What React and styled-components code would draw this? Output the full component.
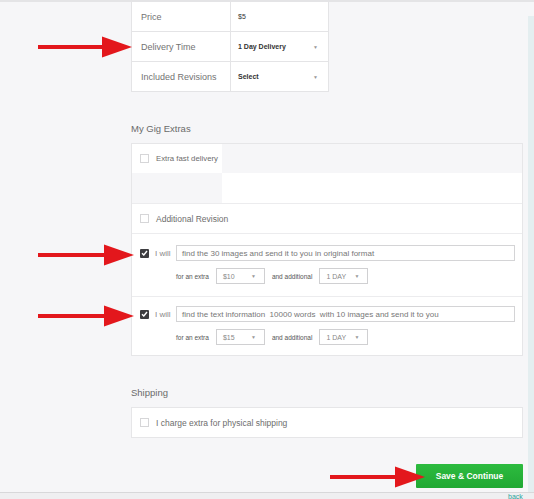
import React from 'react'
import styled, { createGlobalStyle } from 'styled-components'

const GlobalStyle = createGlobalStyle`
    html, body {
        margin: 0;
        padding: 0;
        background: #f6f6f8;
        font-family: "Liberation Sans", Arial, sans-serif;
    }
`

const Page = styled.div`
    position: relative;
    height: 499px;
    overflow: hidden;
    border-top: 2px solid #e4e4e6;
    box-sizing: border-box;
`

const Column = styled.div`
    margin-left: 131px;
    width: 392px;
    display: flex;
    flex-direction: column;
`

const PriceTable = styled.div`
    width: 198px;
    background: #fff;
    border: 1px solid #e4e4e6;
    border-top: none;
    box-sizing: border-box;
`

const PriceRow = styled.div`
    display: grid;
    grid-template-columns: 99px 1fr;
    height: 30px;
    border-bottom: 1px solid #e4e4e6;
    box-sizing: border-box;
    &:last-child { border-bottom: none; height: 29px; }
`

const Label = styled.div`
    display: flex;
    align-items: center;
    padding-left: 9px;
    font-size: 9px;
    color: #737373;
    border-right: 1px solid #e4e4e6;
`

const Value = styled.div`
    display: flex;
    align-items: center;
    justify-content: space-between;
    padding: 0 10px 0 7px;
    font-size: 7px;
    color: #333;
    font-weight: ${p => (p.$bold ? 600 : 400)};
`

const Caret = styled.span`
    font-size: 5px;
    color: #999;
`

const Heading = styled.div`
    font-size: 9.5px;
    color: #6a6a6a;
    line-height: 12px;
    margin-top: ${p => p.$top}px;
    margin-bottom: 8px;
`

const Box = styled.div`
    border: 1px solid #e6e6e8;
    background: #fff;
`

const SplitRow = styled.div`
    display: grid;
    grid-template-columns: 90px 1fr;
    height: ${p => p.$h}px;
`

const Cell = styled.div`
    display: flex;
    align-items: center;
    background: ${p => (p.$white ? '#fff' : '#f6f6f8')};
    padding-left: 8px;
    gap: 7px;
    white-space: nowrap;
`

const OptionRow = styled.div`
    display: flex;
    align-items: center;
    gap: 7px;
    height: 29px;
    padding-left: 8px;
    border-top: ${p => (p.$first ? 'none' : '1px solid #ececee')};
    font-size: 8.5px;
    color: #6d6d6d;
`

const Check = styled.span`
    width: 7px;
    height: 7px;
    flex: none;
    border: 1px solid #d6d6d8;
    background: #fff;
    display: inline-flex;
`

const Checked = styled.span`
    width: 9px;
    height: 9px;
    flex: none;
    border-radius: 1px;
    background: #3d3d40;
    display: inline-flex;
    align-items: center;
    justify-content: center;
`

const Text = styled.span`
    font-size: 7.8px;
    color: #6d6d6d;
`

const Extra = styled.div`
    border-top: 1px solid #ececee;
    padding: ${p => p.$pad};
    display: flex;
    flex-direction: column;
    gap: 7px;
`

const WillLine = styled.div`
    display: flex;
    align-items: center;
    padding-left: 8px;
    padding-right: 7px;
`

const Will = styled.span`
    font-size: 8px;
    color: #888;
    margin-left: 6px;
    width: 21px;
`

const TextInput = styled.div`
    flex: 1;
    height: 16px;
    border: 1px solid #d4d4d6;
    box-sizing: border-box;
    display: flex;
    align-items: center;
    padding-left: 5px;
    font-size: 8px;
    color: #777;
    white-space: pre;
`

const Terms = styled.div`
    display: flex;
    align-items: center;
    padding-left: 44px;
    gap: 7px;
`

const Small = styled.span`
    font-size: 6.5px;
    color: #555;
`

const MiniSelect = styled.div`
    width: 49px;
    height: 16px;
    box-sizing: border-box;
    border: 1px solid #d0d0d2;
    background: #fff;
    display: flex;
    align-items: center;
    justify-content: space-between;
    padding: 0 8px 0 6px;
    font-size: 7px;
    color: #888;
`

const Actions = styled.div`
    display: flex;
    justify-content: flex-end;
    margin-top: 26px;
`

const SaveButton = styled.button`
    width: 107px;
    height: 24px;
    border: none;
    border-radius: 1px;
    background: linear-gradient(#2dbb3f, #20a833);
    color: #fff;
    font-family: inherit;
    font-size: 8.5px;
    font-weight: 700;
`

const Footer = styled.div`
    position: absolute;
    left: 0;
    right: 0;
    top: 490px;
    bottom: 0;
    border-top: 1px solid #d8d8da;
    background: #efeff1;
`

const Back = styled.span`
    position: absolute;
    left: 508px;
    top: 0;
    font-size: 7px;
    line-height: 8px;
    color: #2aa39b;
`

const SideStrip = styled.div`
    position: absolute;
    right: 0;
    top: 14px;
    bottom: 0;
    width: 6px;
    background: #e4eef0;
`

const Pointer = styled.svg`
    position: absolute;
    left: 0;
    top: 0;
    pointer-events: none;
`

function Arrow({ x1, x2, y }) {
    const base = x2 - 30
    return (
        <>
            <rect x={x1} y={y - 2} width={base - x1} height={4} fill="#e3171c" />
            <polygon points={`${base},${y - 10.5} ${x2},${y} ${base},${y + 10.5}`} fill="#e3171c" />
        </>
    )
}

const Tick = () => (
    <svg width="7" height="6" viewBox="0 0 7 6">
        <path d="M1 3.2 L2.8 5 L6 1" stroke="#fff" strokeWidth="1.4" fill="none" />
    </svg>
)

function ExtraItem({ text, price, pad }) {
    return (
        <Extra $pad={pad}>
            <WillLine>
                <Checked><Tick /></Checked>
                <Will>I will</Will>
                <TextInput>{text}</TextInput>
            </WillLine>
            <Terms>
                <Small>for an extra</Small>
                <MiniSelect>{price}<Caret>▼</Caret></MiniSelect>
                <Small>and additional</Small>
                <MiniSelect>1 DAY<Caret>▼</Caret></MiniSelect>
            </Terms>
        </Extra>
    )
}

export default function App() {
    return (
        <Page>
            <GlobalStyle />
            <Column>
                <PriceTable>
                    <PriceRow>
                        <Label>Price</Label>
                        <Value>$5</Value>
                    </PriceRow>
                    <PriceRow>
                        <Label>Delivery Time</Label>
                        <Value $bold>1 Day Delivery<Caret>▼</Caret></Value>
                    </PriceRow>
                    <PriceRow>
                        <Label>Included Revisions</Label>
                        <Value $bold>Select<Caret>▼</Caret></Value>
                    </PriceRow>
                </PriceTable>

                <Heading $top={31}>My Gig Extras</Heading>
                <Box>
                    <SplitRow $h={29}>
                        <Cell $white><Check /><Text>Extra fast delivery</Text></Cell>
                        <Cell />
                    </SplitRow>
                    <SplitRow $h={30}>
                        <Cell />
                        <Cell $white />
                    </SplitRow>
                    <OptionRow><Check />Additional Revision</OptionRow>
                    <ExtraItem
                        text="find the 30 images and send it to you in original format"
                        price="$10"
                        pad="11px 0 12px"
                    />
                    <ExtraItem
                        text="find the text information  10000 words  with 10 images and send it to you"
                        price="$15"
                        pad="9px 0 10px"
                    />
                </Box>

                <Heading $top={31}>Shipping</Heading>
                <Box>
                    <OptionRow $first>
                        <Check />I charge extra for physical shipping
                    </OptionRow>
                </Box>

                <Actions>
                    <SaveButton>Save &amp; Continue</SaveButton>
                </Actions>
            </Column>

            <SideStrip />
            <Footer><Back>back</Back></Footer>

            <Pointer width="534" height="499">
                <Arrow x1={38} x2={132} y={45} />
                <Arrow x1={38} x2={134} y={253} />
                <Arrow x1={38} x2={134} y={314} />
                <Arrow x1={330} x2={425} y={475} />
            </Pointer>
        </Page>
    )
}
